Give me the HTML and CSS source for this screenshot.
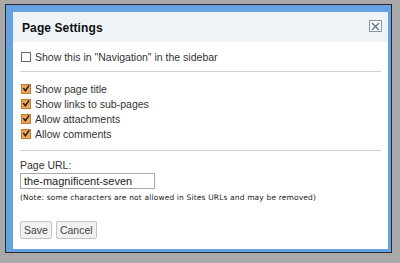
FILE: index.html
```html
<!doctype html>
<html>
<head>
<meta charset="utf-8">
<title>Page Settings</title>
<link rel="stylesheet" href="styles.css">
</head>
<body>

<div class="dialog">
 <div class="panel">
  <div class="head">
   <span class="title">Page Settings</span>
   <span class="close">
    <svg width="9" height="9" viewBox="0 0 9 9"><path d="M1 1L8 8M8 1L1 8" stroke="#6a7480" stroke-width="1.4" fill="none"/></svg>
   </span>
  </div>

  <div class="section first">
   <div class="row"><span class="box"></span>Show this in "Navigation" in the sidebar</div>
  </div>

  <div class="section checks">
   <div class="row"><span class="box on"><svg width="9" height="9" viewBox="0 0 9 9"><path d="M1.5 4L3.8 7L8 1" stroke="#2a1a08" stroke-width="1.6" fill="none"/></svg></span>Show page title</div>
   <div class="row"><span class="box on"><svg width="9" height="9" viewBox="0 0 9 9"><path d="M1.5 4L3.8 7L8 1" stroke="#2a1a08" stroke-width="1.6" fill="none"/></svg></span>Show links to sub-pages</div>
   <div class="row"><span class="box on"><svg width="9" height="9" viewBox="0 0 9 9"><path d="M1.5 4L3.8 7L8 1" stroke="#2a1a08" stroke-width="1.6" fill="none"/></svg></span>Allow attachments</div>
   <div class="row"><span class="box on"><svg width="9" height="9" viewBox="0 0 9 9"><path d="M1.5 4L3.8 7L8 1" stroke="#2a1a08" stroke-width="1.6" fill="none"/></svg></span>Allow comments</div>
  </div>

  <div class="section url">
   <div class="label">Page URL:</div>
   <div class="field">the-magnificent-seven</div>
   <div class="note">(Note: some characters are not allowed in Sites URLs and may be removed)</div>
   <div class="buttons">
    <span class="btn">Save</span>
    <span class="btn">Cancel</span>
   </div>
  </div>
 </div>
</div>

</body>
</html>
```

FILE: styles.css
```css
body {
	margin: 0;
	background: #a9a9a9;
	font-family: "Liberation Sans", Arial, sans-serif;
	color: #333;
}

.dialog {
	margin: 4px 0 0 5px;
	width: 387px;
	height: 249px;
	border: 1px solid #2a2a2a;
	background: #67a3e3;
	padding: 7px 4px 4px 7px;
	box-sizing: border-box;
}

.panel {
	background: #fff;
	height: 237px;
	width: 375px;
}

.head {
	height: 30px;
	background: #eef3f8;
	display: flex;
	align-items: center;
	justify-content: space-between;
	padding: 0 6px 0 9px;
}

.title {
	font-size: 12px;
	font-weight: bold;
	color: #111;
	letter-spacing: 0.1px;
	padding-top: 2px;
}

.close {
	width: 11px;
	height: 10px;
	border: 1px solid #8a96a4;
	background: #f6f8fb;
	display: flex;
	align-items: center;
	justify-content: center;
	margin-top: -2px;
}

.section {
	margin: 0 7px;
	font-size: 10.5px;
}

.first {
	padding: 7px 0 7px;
	border-bottom: 1px solid #cfcfcf;
}

.checks {
	padding: 9px 0 9px;
	border-bottom: 1px solid #cfcfcf;
}

.row {
	height: 15px;
	display: flex;
	align-items: center;
}

.box {
	width: 8px;
	height: 8px;
	border: 1px solid #6a6a6a;
	margin: 0 4px 0 1px;
	display: flex;
	align-items: center;
	justify-content: center;
}

.box.on {
	background: #eea35c;
	border-color: #c07a38;
}

.label {
	margin-top: 7px;
	line-height: 14px;
}

.field {
	width: 127px;
	height: 14px;
	line-height: 14px;
	border: 1px solid #a8a8a8;
	padding: 0 3px;
	margin-top: 1px;
	color: #222;
	font-size: 11px;
}

.note {
	font-family: "DejaVu Sans", Verdana, sans-serif;
	font-size: 7.5px;
	letter-spacing: 0.15px;
	margin-top: 3px;
	line-height: 12px;
	color: #222;
}

.buttons {
	margin-top: 17px;
	display: flex;
	gap: 4px;
}

.btn {
	height: 16px;
	line-height: 16px;
	padding: 0 3px;
	border: 1px solid #c4c4c4;
	border-radius: 2px;
	background: #f1f1f1;
	color: #444;
	font-size: 10.5px;
}
```
